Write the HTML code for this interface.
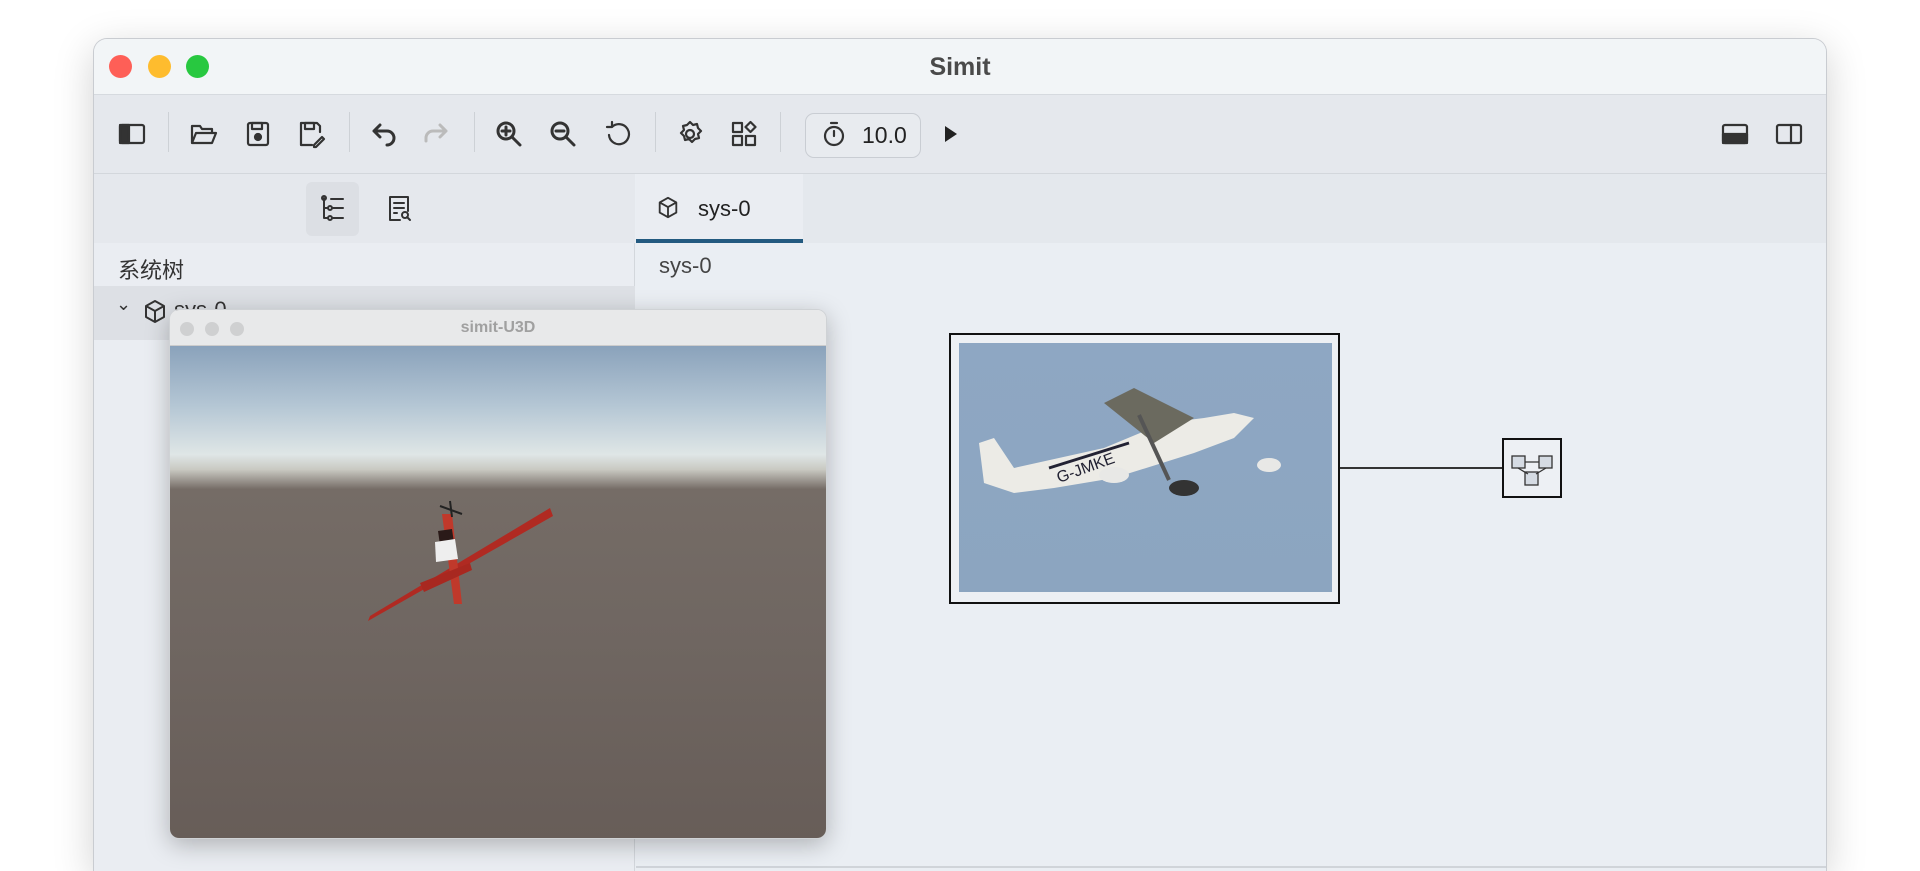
<!DOCTYPE html>
<html style="width:1920px;height:871px;overflow:hidden"><head><meta charset="utf-8"><style>
*{margin:0;padding:0;box-sizing:border-box}
body{width:1920px;height:871px;background:#fff;font-family:"Liberation Sans","Noto Sans CJK SC",sans-serif;position:relative;overflow:hidden}
.win{position:absolute;left:93px;top:38px;width:1734px;height:833px;background:#eaeef3;border-radius:14px 14px 0 0;box-shadow:0 10px 40px rgba(0,0,0,.18);border:1px solid #c9ccd1;border-bottom:none;overflow:hidden}
.tb{position:absolute;left:0;top:0;width:100%;height:56px;background:#f2f5f7;border-bottom:1px solid #d6dadf}
.tl{position:absolute;top:16px;width:23px;height:23px;border-radius:50%}
.title{position:absolute;left:0;width:100%;top:14px;text-align:center;font-weight:bold;font-size:25px;color:#4a4a4a}
.toolbar{position:absolute;left:0;top:56px;width:100%;height:79px;background:#e5e8ed;border-bottom:1px solid #d3d7dc}
.ic{position:absolute;top:24px;width:30px;height:30px}
.sep{position:absolute;top:17px;width:1px;height:40px;background:#cdd1d6}
.side{position:absolute;left:0;top:135px;width:541px;height:698px;background:#eaedf2;border-right:1px solid #d3d7dc}
.tabrow{position:absolute;left:542px;top:135px;right:0;height:69px;background:#e4e8ed}
.svg{stroke:#333;fill:none;stroke-width:2.2;stroke-linecap:round;stroke-linejoin:round}
</style></head><body>
<div class="win">
 <div class="tb">
  <div class="tl" style="left:15px;background:#fe5f57"></div>
  <div class="tl" style="left:54px;background:#febc2e"></div>
  <div class="tl" style="left:92px;background:#28c840"></div>
  <div class="title">Simit</div>
 </div>
 <div class="toolbar">
  <svg class="ic svg" style="left:23px" viewBox="0 0 30 30"><rect x="3" y="6" width="24" height="18" rx="2"/><rect x="3" y="6" width="9" height="18" fill="#333"/></svg>
  <div class="sep" style="left:74px"></div>
  <svg class="ic svg" style="left:95px" viewBox="0 0 30 30"><path d="M3 24V7h8l2 3h10v4M3 24l4-10h20l-4 10z"/></svg>
  <svg class="ic svg" style="left:149px" viewBox="0 0 30 30"><rect x="5" y="4" width="20" height="22" rx="2"/><rect x="9" y="4" width="10" height="6"/><circle cx="15" cy="18" r="3" fill="#333"/></svg>
  <svg class="ic svg" style="left:202px" viewBox="0 0 30 30"><path d="M16 26H5V4h16l3 3v6"/><rect x="9" y="4" width="9" height="6"/><path d="M18 26l8-8 2 2-8 8h-2z"/></svg>
  <div class="sep" style="left:255px"></div>
  <svg class="ic svg" style="left:274px" viewBox="0 0 30 30"><path d="M6 12h13a7 7 0 0 1 0 14M6 12l6-6M6 12l6 6" stroke-width="3"/></svg>
  <svg class="ic svg" style="left:328px;stroke:#bbb" viewBox="0 0 30 30"><path d="M24 12H11a7 7 0 0 0-7 7v3M24 12l-6-6M24 12l-6 6" stroke-width="3"/></svg>
  <div class="sep" style="left:380px"></div>
  <svg class="ic svg" style="left:400px" viewBox="0 0 30 30"><circle cx="12" cy="12" r="8" stroke-width="3"/><path d="M18 18l8 8M12 8v8M8 12h8" stroke-width="3"/></svg>
  <svg class="ic svg" style="left:454px" viewBox="0 0 30 30"><circle cx="12" cy="12" r="8" stroke-width="3"/><path d="M18 18l8 8M8 12h8" stroke-width="3"/></svg>
  <svg class="ic svg" style="left:510px" viewBox="0 0 30 30"><path d="M8 8a10 10 0 1 1-3 8M8 8V3M8 8H3"/></svg>
  <div class="sep" style="left:561px"></div>
  <svg class="ic svg" style="left:581px" viewBox="0 0 30 30"><circle cx="15" cy="15" r="4"/><path d="M15 3l3 3 4-1 1 4 3 3-3 3 1 4-4 1-3 3-3-3-4 1-1-4-3-3 3-3-1-4 4-1z"/></svg>
  <svg class="ic svg" style="left:635px" viewBox="0 0 30 30"><rect x="4" y="4" width="9" height="9"/><rect x="4" y="17" width="9" height="9"/><rect x="17" y="17" width="9" height="9"/><path d="M21.5 3l5 5-5 5-5-5z"/></svg>
  <div class="sep" style="left:686px"></div>
  <div style="position:absolute;left:711px;top:18px;width:116px;height:45px;border:1px solid #c9cdd3;border-radius:9px;background:#e8ebef"></div>
  <svg class="ic svg" style="left:725px" viewBox="0 0 30 30"><circle cx="15" cy="17" r="9"/><path d="M12 4h6M15 17v-5"/></svg>
  <div style="position:absolute;left:768px;top:27px;font-size:23px;color:#222">10.0</div>
  <svg class="ic" style="left:841px" viewBox="0 0 30 30"><path d="M10 7l12 8-12 8z" fill="#222"/></svg>
  <svg class="ic svg" style="left:1626px" viewBox="0 0 30 30"><rect x="3" y="6" width="24" height="18" rx="2"/><rect x="3" y="15" width="24" height="9" fill="#333"/></svg>
  <svg class="ic svg" style="left:1680px" viewBox="0 0 30 30"><rect x="3" y="6" width="24" height="18" rx="2"/><path d="M17 6v18"/></svg>
 </div>
 <div class="side">
  <div style="position:absolute;left:0;top:0;width:541px;height:69px;background:#e5e8ed"></div>
  <div style="position:absolute;left:212px;top:8px;width:53px;height:54px;background:#dcdfe4;border-radius:6px"></div>
  <svg class="svg" style="position:absolute;left:224px;top:20px;width:30px;height:30px;stroke-width:2" viewBox="0 0 30 30"><path d="M6 4v20M6 14h4M6 24h4M13 5h12M15 14h10M15 24h10"/><circle cx="6" cy="4" r="2"/><circle cx="12" cy="14" r="2"/><circle cx="12" cy="24" r="2"/></svg>
  <svg class="svg" style="position:absolute;left:290px;top:20px;width:30px;height:30px;stroke-width:2" viewBox="0 0 30 30"><path d="M16 26H6V3h18v14M10 9h10M10 14h10M10 19h3"/><circle cx="21" cy="21" r="3"/><path d="M23 23l3 3"/></svg>
  <div style="position:absolute;left:24px;top:79px;font-size:22px;color:#333">系统树</div>
  <div style="position:absolute;left:0;top:112px;width:541px;height:54px;background:#dde0e5"></div>
  <div style="position:absolute;left:22px;top:120px;font-size:18px;color:#333">⌄</div>
  <svg class="svg" style="position:absolute;left:48px;top:125px;width:26px;height:26px;stroke-width:2" viewBox="0 0 26 26"><path d="M13 2l9 5v11l-9 5-9-5V7zM4 7l9 5 9-5M13 12v11"/></svg>
  <div style="position:absolute;left:80px;top:123px;font-size:22px;color:#333">sys-0</div>
 </div>
 <div class="tabrow">
  <div style="position:absolute;left:0;top:0;width:167px;height:69px;background:#eaedf2;border-bottom:4px solid #235a80"></div>
  <svg class="svg" style="position:absolute;left:20px;top:22px;width:24px;height:24px;stroke-width:2" viewBox="0 0 26 26"><path d="M13 2l9 5v11l-9 5-9-5V7zM4 7l9 5 9-5M13 12v11"/></svg>
  <div style="position:absolute;left:62px;top:22px;font-size:22px;color:#222">sys-0</div>
 </div>
 <div style="position:absolute;left:565px;top:214px;font-size:22px;color:#444">sys-0</div>
 <div style="position:absolute;left:855px;top:294px;width:391px;height:271px;border:2px solid #111;background:#edf0f4"></div>
 <div style="position:absolute;left:865px;top:304px;width:373px;height:249px;background:linear-gradient(#8ea7c3,#8ca5c0)">
  <svg width="373" height="249" viewBox="0 0 373 249">
   <path d="M20 100l15 -5 20 30 90 -20 60 -25 40 -5 30 -5 20 5-20 20-40 15-80 25-60 10-40 5-30-10z" fill="#ecebe6"/>
   <path d="M145 60l30-15 60 30-40 25z" fill="#6b6a5f"/>
   <path d="M180 72l30 65" stroke="#555" stroke-width="4"/>
   <path d="M90 125l80-25" stroke="#223" stroke-width="3"/>
   <text x="100" y="140" font-size="16" fill="#223" transform="rotate(-20 100 140)" font-family="Liberation Sans">G-JMKE</text>
   <ellipse cx="225" cy="145" rx="15" ry="8" fill="#333"/>
   <ellipse cx="155" cy="132" rx="15" ry="8" fill="#e8e8e6"/>
   <ellipse cx="310" cy="122" rx="12" ry="7" fill="#e8e8e6"/>
  </svg>
 </div>
 <div style="position:absolute;left:1246px;top:428px;width:163px;height:2px;background:#333"></div>
 <div style="position:absolute;left:1408px;top:399px;width:60px;height:60px;border:2px solid #111;background:#edf0f4">
  <svg width="56" height="56" viewBox="0 0 56 56"><g fill="#d5dbe3" stroke="#333" stroke-width="1.3"><rect x="8" y="16" width="13" height="12"/><rect x="35" y="16" width="13" height="12"/><rect x="21" y="32" width="13" height="13"/></g><path d="M21 22h14M14 28l10 6M42 28l-10 6" stroke="#333" stroke-width="1.3"/></svg>
 </div>
 <div style="position:absolute;left:542px;top:827px;right:0;height:2px;background:#d0d4d9"></div>
</div>
<div style="position:absolute;left:169px;top:309px;width:658px;height:530px;border-radius:10px;overflow:hidden;box-shadow:0 6px 24px rgba(0,0,0,.25);border:1px solid #cfd2d5">
 <div style="height:36px;background:#e8e9ea;position:relative;border-bottom:1px solid #ccc">
  <div style="position:absolute;left:10px;top:12px;width:14px;height:14px;border-radius:50%;background:#cfd0d1"></div>
  <div style="position:absolute;left:35px;top:12px;width:14px;height:14px;border-radius:50%;background:#cfd0d1"></div>
  <div style="position:absolute;left:60px;top:12px;width:14px;height:14px;border-radius:50%;background:#cfd0d1"></div>
  <div style="position:absolute;width:100%;text-align:center;top:9px;font-size:16px;font-weight:bold;color:#a0a0a0">simit-U3D</div>
 </div>
 <div style="height:494px;background:linear-gradient(#8aa2bb 0%,#b4c6d4 12%,#dfe6e6 22%,#c9c9c2 25%,#756c66 29%,#6f6661 60%,#675d58 100%);position:relative">
  <svg width="658" height="494" viewBox="0 0 658 494" style="position:absolute;left:0;top:0">
   <path d="M200 270l180-108 3 8-185 105z" fill="#b02a22"/>
   <path d="M272 168l10 0 10 90-8 0z" fill="#c0392b"/>
   <path d="M250 237l50-20 2 7-48 22z" fill="#a82820"/>
   <path d="M268 185l14-2 2 14-14 2z" fill="#2a1a18"/>
   <path d="M265 196l20-3 3 20-22 3z" fill="#eee"/>
   <path d="M270 160l22 8M280 155l2 16" stroke="#222" stroke-width="2"/>
  </svg>
 </div>
</div>
</body></html>
